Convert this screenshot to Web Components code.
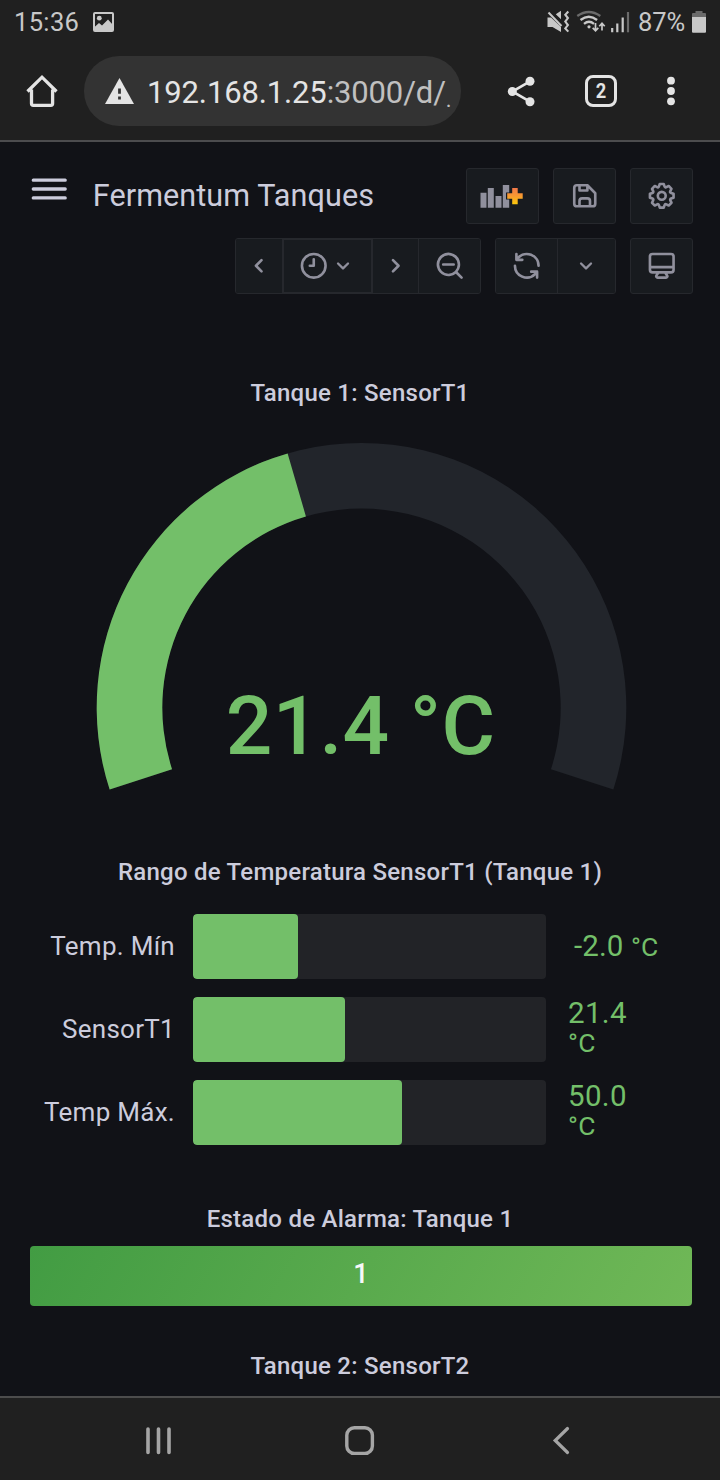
<!DOCTYPE html>
<html lang="es">
<head>
<meta charset="utf-8">
<title>Fermentum Tanques</title>
<style>
html,body{margin:0;background:#111217}
body{width:720px;height:1480px;overflow:hidden;font-family:Roboto,"Liberation Sans",sans-serif;color:#ccccdc}
</style>
</head>
<body>
<phone-screen></phone-screen>
<script>
const define = (name, html, init) => customElements.define(name, class extends HTMLElement {
  connectedCallback() {
    if (this.shadowRoot) return;
    const t = document.createElement('template');
    t.innerHTML = html;
    this.attachShadow({ mode: 'open' }).append(t.content.cloneNode(true));
    if (init) init(this, this.shadowRoot);
  }
});

/* 24-unit line icons used by the dashboard toolbar */
const GLYPHS = {
  save: 'M20.71,9.29l-6-6a1,1,0,0,0-.32-.21A1.09,1.09,0,0,0,14,3H6A3,3,0,0,0,3,6V18a3,3,0,0,0,3,3H18a3,3,0,0,0,3-3V10A1,1,0,0,0,20.71,9.29ZM9,5h4V7H9Zm6,14H9V16a1,1,0,0,1,1-1h4a1,1,0,0,1,1,1Zm4-1a1,1,0,0,1-1,1H17V16a3,3,0,0,0-3-3H10a3,3,0,0,0-3,3v3H6a1,1,0,0,1-1-1V6A1,1,0,0,1,6,5H7V8A1,1,0,0,0,8,9h6a1,1,0,0,0,1-1V6.41l4,4Z',
  cog: 'M21.32,9.55l-1.89-.63.89-1.78A1,1,0,0,0,20.13,6L18,3.87a1,1,0,0,0-1.15-.19l-1.78.89-.63-1.89A1,1,0,0,0,13.5,2h-3a1,1,0,0,0-.95.68L8.92,4.57,7.14,3.68A1,1,0,0,0,6,3.87L3.87,6a1,1,0,0,0-.19,1.15l.89,1.78-1.89.63A1,1,0,0,0,2,10.5v3a1,1,0,0,0,.68.95l1.89.63-.89,1.78A1,1,0,0,0,3.87,18L6,20.13a1,1,0,0,0,1.15.19l1.78-.89.63,1.89a1,1,0,0,0,.95.68h3a1,1,0,0,0,.95-.68l.63-1.89,1.78.89A1,1,0,0,0,18,20.13L20.13,18a1,1,0,0,0,.19-1.15l-.89-1.78,1.89-.63A1,1,0,0,0,22,13.5v-3A1,1,0,0,0,21.32,9.55ZM20,12.78l-1.2.4A2,2,0,0,0,17.64,16l.57,1.14-1.1,1.1L16,17.64a2,2,0,0,0-2.79,1.16l-.4,1.2H11.22l-.4-1.2A2,2,0,0,0,8,17.64l-1.14.57-1.1-1.1L6.36,16A2,2,0,0,0,5.2,13.18L4,12.78V11.22l1.2-.4A2,2,0,0,0,6.36,8L5.79,6.89l1.1-1.1L8,6.36A2,2,0,0,0,10.82,5.2l.4-1.2h1.56l.4,1.2A2,2,0,0,0,16,6.36l1.14-.57,1.1,1.1L17.64,8a2,2,0,0,0,1.16,2.79l1.2.4ZM12,8a4,4,0,1,0,4,4A4,4,0,0,0,12,8Zm0,6a2,2,0,1,1,2-2A2,2,0,0,1,12,14Z',
  sync: 'M19.91,15.51H15.38a1,1,0,0,0,0,2h2.4A8,8,0,0,1,4,12a1,1,0,0,0-2,0,10,10,0,0,0,16.88,7.23V21a1,1,0,0,0,2,0V16.5A1,1,0,0,0,19.91,15.51ZM12,2A10,10,0,0,0,5.12,4.77V3a1,1,0,0,0-2,0V7.5a1,1,0,0,0,1,1h4.5a1,1,0,0,0,0-2H6.22A8,8,0,0,1,20,12a1,1,0,0,0,2,0A10,10,0,0,0,12,2Z',
  clock: 'M12,2A10,10,0,1,0,22,12,10,10,0,0,0,12,2Zm0,18a8,8,0,1,1,8-8A8,8,0,0,1,12,20ZM12,6a1,1,0,0,0-1,1v4H9a1,1,0,0,0,0,2h3a1,1,0,0,0,1-1V7A1,1,0,0,0,12,6Z',
  zoomout: 'M21.71,20.29,18,16.61A9,9,0,1,0,16.61,18l3.68,3.68a1,1,0,0,0,1.42,0A1,1,0,0,0,21.71,20.29ZM11,18a7,7,0,1,1,7-7A7,7,0,0,1,11,18Zm4-8H7a1,1,0,0,0,0,2h8a1,1,0,0,0,0-2Z',
  monitor: 'M19,2H5A3,3,0,0,0,2,5V15a3,3,0,0,0,3,3H7.64l-.58,1a2,2,0,0,0,0,2,2,2,0,0,0,1.75,1h6.46A2,2,0,0,0,17,21a2,2,0,0,0,0-2l-.59-1H19a3,3,0,0,0,3-3V5A3,3,0,0,0,19,2ZM8.77,20,10,18H14l1.2,2ZM20,15a1,1,0,0,1-1,1H5a1,1,0,0,1-1-1V14H20Zm0-3H4V5A1,1,0,0,1,5,4H19a1,1,0,0,1,1,1Z',
  down: 'M17,9.17a1,1,0,0,0-1.41,0L12,12.71,8.46,9.17a1,1,0,0,0-1.41,0,1,1,0,0,0,0,1.42l4.24,4.24a1,1,0,0,0,1.42,0L17,10.59A1,1,0,0,0,17,9.17Z'
};
define('line-icon', `<style>:host{display:block;flex:none;color:#90909d}svg{display:block}</style><svg viewBox="0 0 24 24" fill="currentColor"><path/></svg>`, (el, root) => {
  const svg = root.querySelector('svg'), size = el.getAttribute('size') || 31.5;
  svg.setAttribute('width', size); svg.setAttribute('height', size);
  root.querySelector('path').setAttribute('d', GLYPHS[el.getAttribute('name')]);
  if (el.hasAttribute('turn')) svg.style.transform = `rotate(${el.getAttribute('turn')}deg)`;
});

define('status-bar', `<style>
:host{display:flex;height:44px;align-items:center;box-sizing:border-box;padding:0 14px 0 14px;background:#202020;color:#c8c8c8;font-size:25.5px;line-height:44px}
svg{display:block;flex:none}.gap{flex:1}
.time{width:78px;letter-spacing:.35px}.pct{width:54px;margin-left:6px;white-space:nowrap;letter-spacing:-.1px}
.mute{margin-right:4px}.wifi{margin-right:1px}
</style>
<span class="time">15:36</span>
<svg width="23" height="24" viewBox="92 10 23 24"><rect x="94" y="13" width="19" height="18" rx="1" fill="none" stroke="#c8c8c8" stroke-width="2"/><circle cx="99.3" cy="18.2" r="2.4" fill="#c8c8c8"/><path d="M94 27.5L99 23l3 2.500 6-6L113 25v6H94z" fill="#c8c8c8"/></svg>
<span class="gap"></span>
<svg class="mute" width="26" height="26" viewBox="546 8 26 26"><path d="M547.5 16.500H551L561 26V31L552.500 26H547.500zM555.800 13.300L561 9.800V18.200z" fill="#c8c8c8"/><path d="M548.500 11.500L561.500 25" stroke="#c8c8c8" stroke-width="2"/><path d="M568.300 10.500l-3 3.200 2.600 3.400-2.600 3.500 2.600 3.500-2.600 3.300 3 3.200" stroke="#c8c8c8" stroke-width="2.100" fill="none"/></svg>
<svg class="wifi" width="31" height="26" viewBox="576 8 31 26" fill="none" stroke-width="2.300"><path d="M577.300 15q11.500-8 23 0" stroke="#6b6b6b"/><path d="M580.500 19q8.300-6.500 16.600 0M584 22.800q5-4 10 0" stroke="#c8c8c8"/><circle cx="589" cy="25.800" r="1.600" fill="#c8c8c8"/><path d="M595.500 22v7.500m-2.800-2.700l2.800 3 2.800-3M602 29.500v-7m-2.700 2.700l2.700-3 2.700 3" stroke="#c8c8c8" stroke-width="1.700"/></svg>
<svg width="24" height="26" viewBox="608 8 24 26"><path d="M612.200 27v4.300M617.300 22.500v8.800M622.700 16.500v14.800" stroke="#c8c8c8" stroke-width="2.200"/><path d="M628 11v20.300" stroke="#6b6b6b" stroke-width="2.200"/></svg>
<span class="pct">87%</span>
<svg width="14" height="26" viewBox="692 8 14 26"><path d="M692 16v-3q0-1 1-1h2.500v-2h7v2h2.500q1 0 1 1v3z" fill="#6b6b6b"/><path d="M692 16h14v14.500q0 1.200-1 1.200h-12q-1 0-1-1.200z" fill="#c8c8c8"/></svg>`);

define('browser-bar', `<style>
:host{display:flex;height:98px;box-sizing:border-box;background:#202020;border-bottom:2px solid #4c4c4e;padding:12px 0 14px 24px;align-items:center;color:#e4e4e4}
svg{display:block;flex:none}
.pill{display:flex;align-items:center;width:377px;height:70px;box-sizing:border-box;border-radius:35px;background:#333;margin:0 44px 0 24px;padding-left:20px}
.url{white-space:nowrap;font-size:31px;letter-spacing:-.14px;line-height:44px;margin:3px 0 0 12px}
.url span{color:#c0c0c0}
.url small{font-size:22px;vertical-align:-4px;line-height:0;color:#c0c0c0}
.tab{width:32px;height:32px;box-sizing:border-box;border:3.300px solid #e4e4e4;border-radius:8px;font:700 21px/26px Roboto,sans-serif;text-align:center;margin:0 49px 0 46px}
.tab span{display:block;transform:scaleX(.87)}
</style>
<svg width="36" height="36" viewBox="24 73 36 36"><path d="M27.500 91.500L42 77.200 56.500 91.500M31.500 89.500v14q0 1.800 1.800 1.800h17.500q1.800 0 1.800-1.800v-14" fill="none" stroke="#e4e4e4" stroke-width="3.300"/></svg>
<div class="pill"><svg width="31" height="28" viewBox="104 76 31 28"><path d="M119.500 77L134 103H105z" fill="#e4e4e4"/><path d="M119.500 87.500v5.300M119.500 95.500v3" stroke="#333" stroke-width="2.800"/></svg><div class="url">192.168.1.25<span>:3000/d/</span><small>.</small></div></div>
<svg width="34" height="36" viewBox="505 73 34 36"><path d="M530 81.300L512.300 91.500 530 101.700" fill="none" stroke="#e4e4e4" stroke-width="2.600"/><g fill="#e4e4e4"><circle cx="530" cy="81.300" r="4.500"/><circle cx="512.300" cy="91.500" r="4.500"/><circle cx="530" cy="101.700" r="4.500"/></g></svg>
<div class="tab"><span>2</span></div>
<svg width="10" height="36" viewBox="666 73 10 36" fill="#e4e4e4"><circle cx="671" cy="80.700" r="3.900"/><circle cx="671" cy="91" r="3.900"/><circle cx="671" cy="101.300" r="3.900"/></svg>`);

define('tool-button', `<style>:host{display:flex;align-items:center;justify-content:center;box-sizing:border-box;height:56px;background:#181b1f;border:1px solid #26282d;border-radius:3px}</style><slot></slot>`,
  el => { el.style.width = el.getAttribute('w') + 'px'; });
define('button-group', `<style>:host{display:flex;height:56px;box-sizing:border-box;border:1px solid #26282d;border-radius:3px;background:#181b1f;overflow:hidden}
::slotted(tool-button){height:54px!important;border-width:0 1px 0 0!important;border-radius:0!important}
::slotted(tool-button:last-child){border:0!important}
::slotted(tool-button.frame){border-width:1px 2px 1px 1px!important}</style><slot></slot>`);

define('dash-header', `<style>
:host{display:flex;flex-direction:column;gap:14px;padding:26px 27px 0 31px}
.row{display:flex;gap:14px;align-items:center}.end{justify-content:flex-end}
.menu{display:block;align-self:flex-start;margin-top:9px;flex:none}
.add{padding-right:2px}.pick{padding-right:2px}
h1{font-weight:400;font-size:30.600px;line-height:56px;letter-spacing:.06px;margin:0 auto 0 10.800px;white-space:nowrap}
</style>
<div class="row"><svg class="menu" width="37" height="26" viewBox="31 177 37 26"><path d="M33.300 180.200h31.900M33.300 189h31.900M33.300 197.900h31.900" stroke="#ccccdc" stroke-width="3.300" stroke-linecap="round"/></svg>
<h1>Fermentum Tanques</h1>
<tool-button class="add" w="73"><svg width="44" height="26" viewBox="480.500 183 44 26"><defs><linearGradient id="p" x2="0" y2="1"><stop stop-color="#f2784a"/><stop offset=".5" stop-color="#f79a30"/><stop offset="1" stop-color="#fbca0a"/></linearGradient></defs><g fill="#90909d"><path d="M481 192.700h6V207.700h-6zM488.300 188h6v19.700h-6zM496 196h6v11.700h-6zM503.300 185h6.400v7.500h-3.200v7h3.200v8.200h-6.400z"/></g><path d="M512.700 188h5.500v5.300h5v5.500h-5v5.400h-5.500v-5.400h-5v-5.500h5z" fill="url(#p)"/></svg></tool-button>
<tool-button w="63"><line-icon name="save"></line-icon></tool-button>
<tool-button w="63"><line-icon name="cog"></line-icon></tool-button></div>
<div class="row end">
<button-group><tool-button w="47"><line-icon name="down" turn="90"></line-icon></tool-button><tool-button class="frame" w="90"><line-icon name="clock"></line-icon><line-icon name="down" size="28"></line-icon></tool-button><tool-button w="46"><line-icon name="down" turn="-90"></line-icon></tool-button><tool-button w="61"><line-icon name="zoomout"></line-icon></tool-button></button-group>
<button-group><tool-button w="62"><line-icon name="sync"></line-icon></tool-button><tool-button class="pick" w="57"><line-icon name="down" size="28"></line-icon></tool-button></button-group>
<tool-button w="63"><line-icon name="monitor"></line-icon></tool-button></div>`);

define('panel-title', `<style>:host{display:block;text-align:center;font-size:24px;font-weight:500;line-height:24px;white-space:nowrap;letter-spacing:.25px}</style><slot></slot>`);

define('arc-gauge', `<style>:host{display:block;height:370px}svg{display:block}text{font:500 82px Roboto,sans-serif;letter-spacing:.2px}</style>
<svg width="720" height="370" viewBox="0 430 720 370"><path class="track" fill="#22252b"/><path class="value" fill="#73bf69"/><text x="360.500" y="754" text-anchor="middle" fill="#73bf69"></text></svg>`, (el, root) => {
  /* angles in degrees, clockwise from twelve o'clock */
  const at = (r, a) => `${(361.500 + r * Math.sin(a * Math.PI / 180)).toFixed(2)} ${(707.700 - r * Math.cos(a * Math.PI / 180)).toFixed(2)}`;
  const arc = (a, b) => `M${at(264.800, a)}A264.800 264.800 0 ${b - a > 180 ? 1 : 0} 1 ${at(264.800, b)}L${at(199.200, b)}A199.200 199.200 0 ${b - a > 180 ? 1 : 0} 0 ${at(199.200, a)}Z`;
  root.querySelector('.track').setAttribute('d', arc(-108, 108));
  root.querySelector('.value').setAttribute('d', arc(-108, -16.200));
  root.querySelector('text').textContent = el.getAttribute('value');
});

define('bar-row', `<style>
:host{display:grid;grid-template-columns:175px 353px 1fr;column-gap:18px;height:65px;align-items:center}
.label{text-align:right;font-size:26px;line-height:30px;white-space:nowrap;letter-spacing:.28px;margin-top:-2px}
.track{height:65px;background:#222327;border-radius:4px;overflow:hidden}
.fill{height:65px;background:#73bf69;border-radius:4px}
.value{color:#73bf69;font-size:29.500px;line-height:29px;margin:-3px 0 0 4px;width:66px;letter-spacing:.35px}
.value small{font-size:26.500px;line-height:0}
:host([wide]) .value{width:100px;white-space:nowrap;margin:0 0 0 10px;letter-spacing:.1px}
</style><span class="label"></span><div class="track"><div class="fill"></div></div><div class="value"><span></span> <small>°C</small></div>`, (el, root) => {
  root.querySelector('.label').textContent = el.getAttribute('label');
  root.querySelector('.fill').style.width = el.getAttribute('fill') + 'px';
  root.querySelector('.value span').textContent = el.getAttribute('value');
});

define('alarm-state', `<style>:host{display:block;height:60px;margin:0 28px 0 30px;border-radius:4px;background:linear-gradient(120deg,#429c43,#70b857);color:#f7f8fa;font-size:27px;font-weight:500;line-height:56px;text-align:center}</style><slot></slot>`);

define('dash-board', `<style>
:host{display:flex;flex-direction:column;height:1254px;overflow:hidden;background:#111217}
.t1{margin-top:87px}arc-gauge{margin-top:25px}.t2{margin-top:60px}
.bars{display:flex;flex-direction:column;gap:18px;margin-top:30px}
.t3{margin-top:62px}alarm-state{margin-top:15px;flex:none}.t4{margin-top:48px}
</style>
<dash-header></dash-header>
<panel-title class="t1">Tanque 1: SensorT1</panel-title>
<arc-gauge value="21.4 °C"></arc-gauge>
<panel-title class="t2">Rango de Temperatura SensorT1 (Tanque 1)</panel-title>
<div class="bars"><bar-row label="Temp. Mín" fill="105" value="-2.0" wide></bar-row><bar-row label="SensorT1" fill="152" value="21.4"></bar-row><bar-row label="Temp Máx." fill="209" value="50.0"></bar-row></div>
<panel-title class="t3">Estado de Alarma: Tanque 1</panel-title>
<alarm-state>1</alarm-state>
<panel-title class="t4">Tanque 2: SensorT2</panel-title>`);

define('system-nav', `<style>:host{display:flex;align-items:center;box-sizing:border-box;height:84px;border-top:2px solid #4c4c4c;background:#202020;padding:4px 0 0 143px}svg{display:block;flex:none}.home{margin:0 175px 0 169px}</style>
<svg width="32" height="32" viewBox="143 1425 32 32"><path d="M148 1429v23.500M158.500 1429v23.500M169 1429v23.500" stroke="#a5a5a5" stroke-width="3.600" stroke-linecap="round"/></svg>
<svg class="home" width="32" height="32" viewBox="344 1425 32 32"><rect x="346.800" y="1427.800" width="25.600" height="25.600" rx="7.500" fill="none" stroke="#a5a5a5" stroke-width="3.400"/></svg>
<svg width="22" height="32" viewBox="551 1425 22 32"><path d="M567.500 1428.500L555.200 1440.500 567.500 1452.500" fill="none" stroke="#a5a5a5" stroke-width="3.200" stroke-linecap="round"/></svg>`);

define('phone-screen', `<style>:host{display:flex;flex-direction:column;width:720px;height:1480px;overflow:hidden}</style>
<status-bar></status-bar><browser-bar></browser-bar><dash-board></dash-board><system-nav></system-nav>`);
</script>
</body>
</html>
